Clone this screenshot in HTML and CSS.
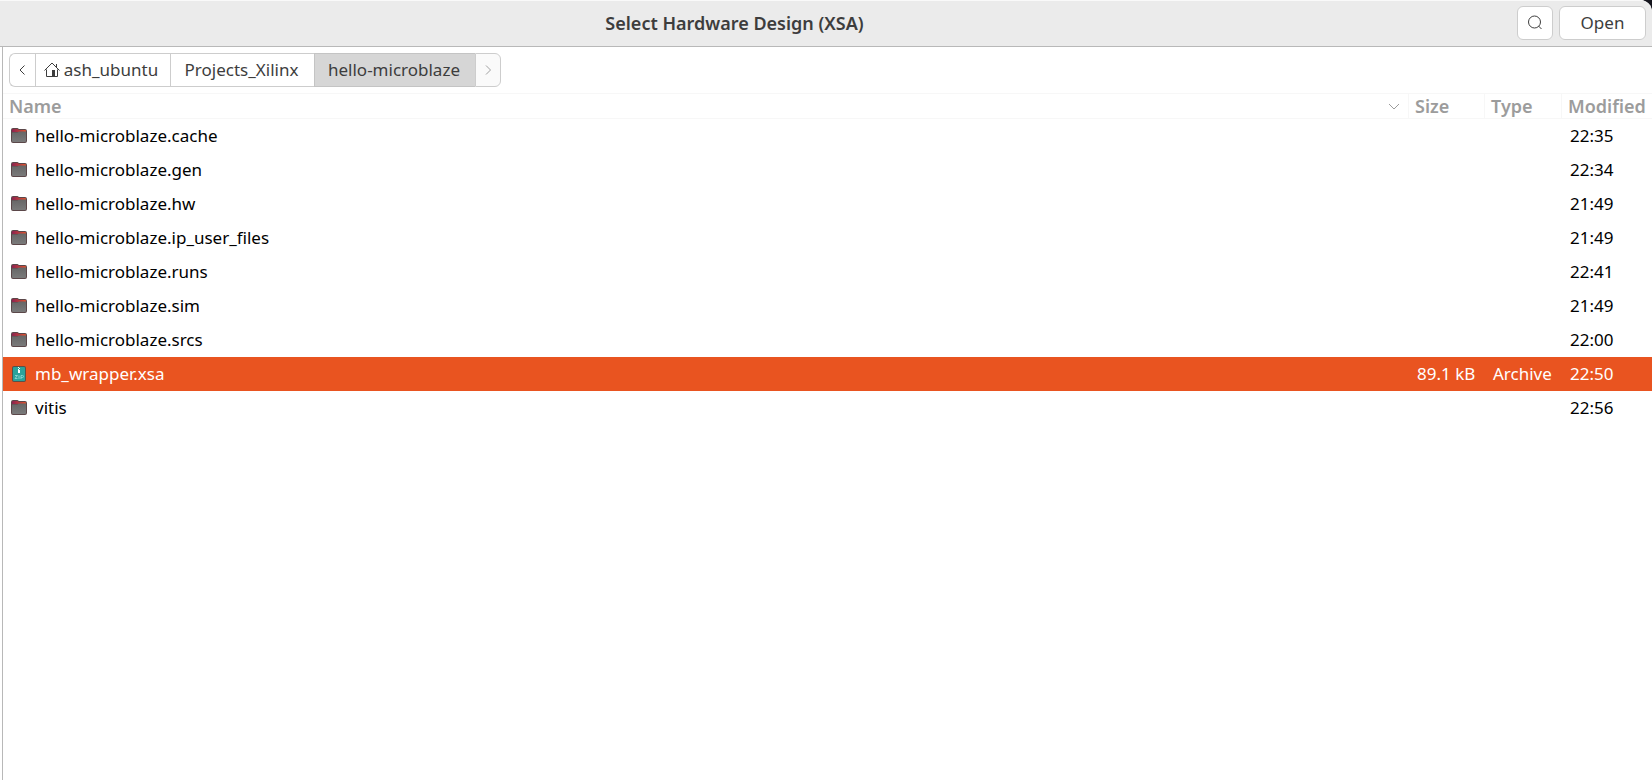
FILE: index.html
```
<!DOCTYPE html>
<html lang="en">
<head>
<meta charset="utf-8">
<title>Select Hardware Design (XSA)</title>
<link rel="stylesheet" href="styles.css">
</head>
<body>
<svg class="sprite" aria-hidden="true">
  <linearGradient id="tab" x1="0" x2="1" y1="0" y2="0">
    <stop offset="0" stop-color="#8b2350"/>
    <stop offset="1" stop-color="#e0522c"/>
  </linearGradient>
  <linearGradient id="front" x1="0" x2="0" y1="0" y2="1">
    <stop offset="0" stop-color="#666"/>
    <stop offset="1" stop-color="#7a7a7a"/>
  </linearGradient>
  <symbol id="folder" viewBox="0 0 16 16">
    <path d="M2 0h4.500l1.500 1h6a2 2 0 0 1 2 2v10a2 2 0 0 1-2 2H2a2 2 0 0 1-2-2V2a2 2 0 0 1 2-2z" fill="#5b4749"/>
    <path d="M2 1h4.500l1.500 1h6a1 1 0 0 1 1 1v1H1V2a1 1 0 0 1 1-1z" fill="url(#tab)"/>
    <path d="M1 4.500h5.500L8 3.500h7V13a1 1 0 0 1-1 1H2a1 1 0 0 1-1-1z" fill="url(#front)"/>
  </symbol>
  <symbol id="archive" viewBox="0 0 16 16">
    <rect x="1" y="0" width="14" height="16" rx="2" fill="#595048"/>
    <rect x="2" y="1" width="12" height="14" rx="1" fill="#2ba39b"/>
    <path d="M7 1h1v1H7zM8 2h1v1H8zM7 3h1v1H7zM7 4h2v3H7z" fill="#fff"/>
    <path d="M4 9.500h2.500L4 12.500h2.500M8 9.500v3.500M10 13V9.500h1.500a1 1 0 0 1 0 2H10" fill="none" stroke="#83d3ce"/>
  </symbol>
</svg>
<div class="dialog">
  <header class="titlebar">
    <h1 class="title">Select Hardware Design (XSA)</h1>
    <button class="button button-icon" type="button" aria-label="Search">
      <svg class="icon" viewBox="0 0 16 16" aria-hidden="true"><circle cx="7.500" cy="7" r="6"/><path d="M11.500 11l3 3"/></svg>
    </button>
    <button class="button button-open" type="button">Open</button>
  </header>
  <main class="browser">
    <nav class="pathbar" aria-label="Location">
      <button class="crumb crumb-back" type="button" aria-label="Back"><svg class="icon" viewBox="0 0 16 16" aria-hidden="true"><path d="M10.500 3.500L6 8l4.500 4.500"/></svg></button>
      <button class="crumb crumb-home" type="button"><svg class="icon" viewBox="0 0 16 16" aria-hidden="true"><path d="M.5 8.500L8 1l7.500 7.500M12.500 2v3M2.500 7.500v7h11v-7"/><path d="M8 8h3v6H8z" fill="currentColor" stroke="none"/></svg><span>ash_ubuntu</span></button>
      <button class="crumb crumb-parent" type="button">Projects_Xilinx</button>
      <button class="crumb crumb-current" type="button" aria-current="location">hello-microblaze</button>
      <button class="crumb crumb-next" type="button" aria-label="Forward" disabled><svg class="icon" viewBox="0 0 16 16" aria-hidden="true"><path d="M6 3.500L10.500 8 6 12.500"/></svg></button>
    </nav>
    <table class="files">
      <colgroup><col><col class="col-size"><col class="col-type"><col class="col-modified"></colgroup>
      <thead>
        <tr>
          <th scope="col" aria-sort="ascending"><span class="sort">Name<svg class="icon" viewBox="0 0 16 16" aria-hidden="true"><path d="M3 6l5 5 5-5"/></svg></span></th>
          <th scope="col">Size</th><th scope="col">Type</th><th scope="col">Modified</th>
        </tr>
      </thead>
      <tbody>
        <tr><td><span class="file"><svg class="file-icon" aria-hidden="true"><use href="#folder"/></svg>hello-microblaze.cache</span></td><td></td><td></td><td>22:35</td></tr>
        <tr><td><span class="file"><svg class="file-icon" aria-hidden="true"><use href="#folder"/></svg>hello-microblaze.gen</span></td><td></td><td></td><td>22:34</td></tr>
        <tr><td><span class="file"><svg class="file-icon" aria-hidden="true"><use href="#folder"/></svg>hello-microblaze.hw</span></td><td></td><td></td><td>21:49</td></tr>
        <tr><td><span class="file"><svg class="file-icon" aria-hidden="true"><use href="#folder"/></svg>hello-microblaze.ip_user_files</span></td><td></td><td></td><td>21:49</td></tr>
        <tr><td><span class="file"><svg class="file-icon" aria-hidden="true"><use href="#folder"/></svg>hello-microblaze.runs</span></td><td></td><td></td><td>22:41</td></tr>
        <tr><td><span class="file"><svg class="file-icon" aria-hidden="true"><use href="#folder"/></svg>hello-microblaze.sim</span></td><td></td><td></td><td>21:49</td></tr>
        <tr><td><span class="file"><svg class="file-icon" aria-hidden="true"><use href="#folder"/></svg>hello-microblaze.srcs</span></td><td></td><td></td><td>22:00</td></tr>
        <tr class="selected" aria-selected="true"><td><span class="file"><svg class="file-icon" aria-hidden="true"><use href="#archive"/></svg>mb_wrapper.xsa</span></td><td>89.1 kB</td><td>Archive</td><td>22:50</td></tr>
        <tr><td><span class="file"><svg class="file-icon" aria-hidden="true"><use href="#folder"/></svg>vitis</span></td><td></td><td></td><td>22:56</td></tr>
      </tbody>
    </table>
  </main>
</div>
</body>
</html>
```
FILE: styles.css
```
* { box-sizing: border-box; }

body {
  margin: 0;
  background: #14141c;
  color: #000;
  font: 17px/24px "Noto Sans", "Open Sans", sans-serif;
}

button { font: inherit; color: #3d3d3d; }

.sprite { position: absolute; width: 0; height: 0; }

.dialog {
  display: flex;
  flex-direction: column;
  min-height: 100vh;
  background: #fff;
  border-top-right-radius: 12px;
  overflow: hidden;
}

.titlebar {
  display: flex;
  align-items: center;
  gap: 6px;
  height: 47px;
  padding: 0 6px 2px;
  background: #ebebeb;
  border-top: 1px solid #f9f9f9;
  border-bottom: 1px solid #b8b8b8;
}

.title {
  flex: 1;
  margin: 0;
  padding-right: 48px;
  color: #3d3d3d;
  font-size: 18px;
  font-weight: 600;
  text-align: center;
}

.button {
  display: flex;
  align-items: center;
  justify-content: center;
  height: 34px;
  padding: 0;
  background: #fff;
  border: 1px solid #cdcdcd;
  border-radius: 6px;
}

.button-icon { width: 36px; }
.button-open { width: 87px; }

.icon {
  flex: none;
  width: 16px;
  height: 16px;
  fill: none;
  stroke: currentColor;
}

.browser {
  flex: 1;
  margin-left: 2px;
  border-left: 1px solid #b8b8b8;
}

.pathbar { display: flex; padding: 6px; }

.crumb {
  display: flex;
  align-items: center;
  justify-content: center;
  gap: 4px;
  height: 34px;
  padding: 0 2px 0 0;
  background: #fff;
  border: 1px solid #cdcdcd;
  border-right-width: 0;
}

.crumb-back { width: 26px; border-radius: 6px 0 0 6px; }
.crumb-home { width: 135px; padding-right: 4px; }
.crumb-parent { width: 144px; }
.crumb-current { width: 161px; background: #d6d6d6; border-color: #c4c4c4; }
.crumb-next {
  width: 26px;
  padding: 0;
  background: #fafafa;
  border-right-width: 1px;
  border-radius: 0 6px 6px 0;
  color: #a0a0a0;
}

.files {
  width: 100%;
  border-collapse: separate;
  border-spacing: 0;
  table-layout: fixed;
}

.col-size { width: 76px; }
.col-type { width: 77px; }
.col-modified { width: 91px; }

th {
  height: 26px;
  padding: 0 6px;
  border: solid #f7f7f7;
  border-width: 1px 0 1px 1px;
  color: #9c9c9c;
  font-size: 18px;
  font-weight: 600;
  text-align: left;
}

th:first-child { border-left: 0; }

td { height: 34px; padding: 0 0 0 9px; white-space: nowrap; }

td:first-child { padding-left: 8px; }

.sort { display: flex; align-items: center; justify-content: space-between; }

.file { display: flex; align-items: center; gap: 8px; }

.file-icon { width: 16px; height: 16px; }

.selected { background: #e95420; color: #fff; }
```
